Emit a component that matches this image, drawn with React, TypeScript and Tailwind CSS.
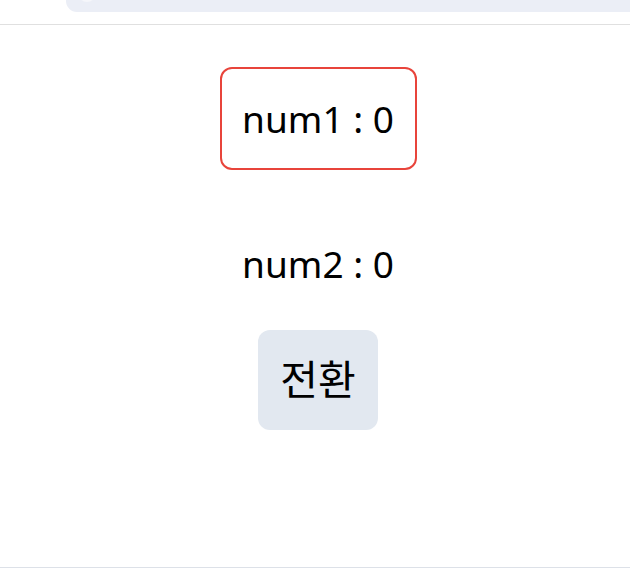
import React, { useState } from "react";

const App = () => {
  const [num1] = useState(0);
  const [num2] = useState(0);
  const [first, setFirst] = useState(true);

  return (
    <div className="w-[630px] h-[568px] bg-white overflow-hidden flex flex-col" style={{ fontFamily: '"Noto Sans", "Noto Sans CJK KR", sans-serif' }}>
      {/* Browser bar */}
      <div className="h-[25px] border-b border-[#e0e0e0] flex shrink-0">
        <div className="ml-[66px] -mt-[10px] h-[22px] flex-1 rounded-l-[22px] bg-[#ebeef6] flex items-start">
          <div className="ml-[12px] -mt-[6px] w-[18px] h-[18px] rounded-full border-2 border-[#f5f6fa]"></div>
        </div>
      </div>

      {/* Counters */}
      <div className="flex-1 flex flex-col items-center pt-[42px] pl-[6px] border-b border-[#dde1e8]">
        <div className={`w-[197px] h-[103px] flex items-center justify-center rounded-[12px] border-2 ${first ? "border-[#e8443b]" : "border-transparent"} text-[37px] text-black`}>
          num1 : {num1}
        </div>
        <div className={`mt-[59px] w-[197px] h-[70px] flex items-center justify-center rounded-[12px] border-2 ${!first ? "border-[#e8443b]" : "border-transparent"} text-[37px] text-black`}>
          num2 : {num2}
        </div>
        <button
          onClick={() => setFirst(!first)}
          className="mt-[31px] w-[120px] h-[100px] rounded-[12px] bg-[#e2e8f0] text-[41px] text-black"
        >
          전환
        </button>
      </div>
    </div>
  );
};

export default App;
